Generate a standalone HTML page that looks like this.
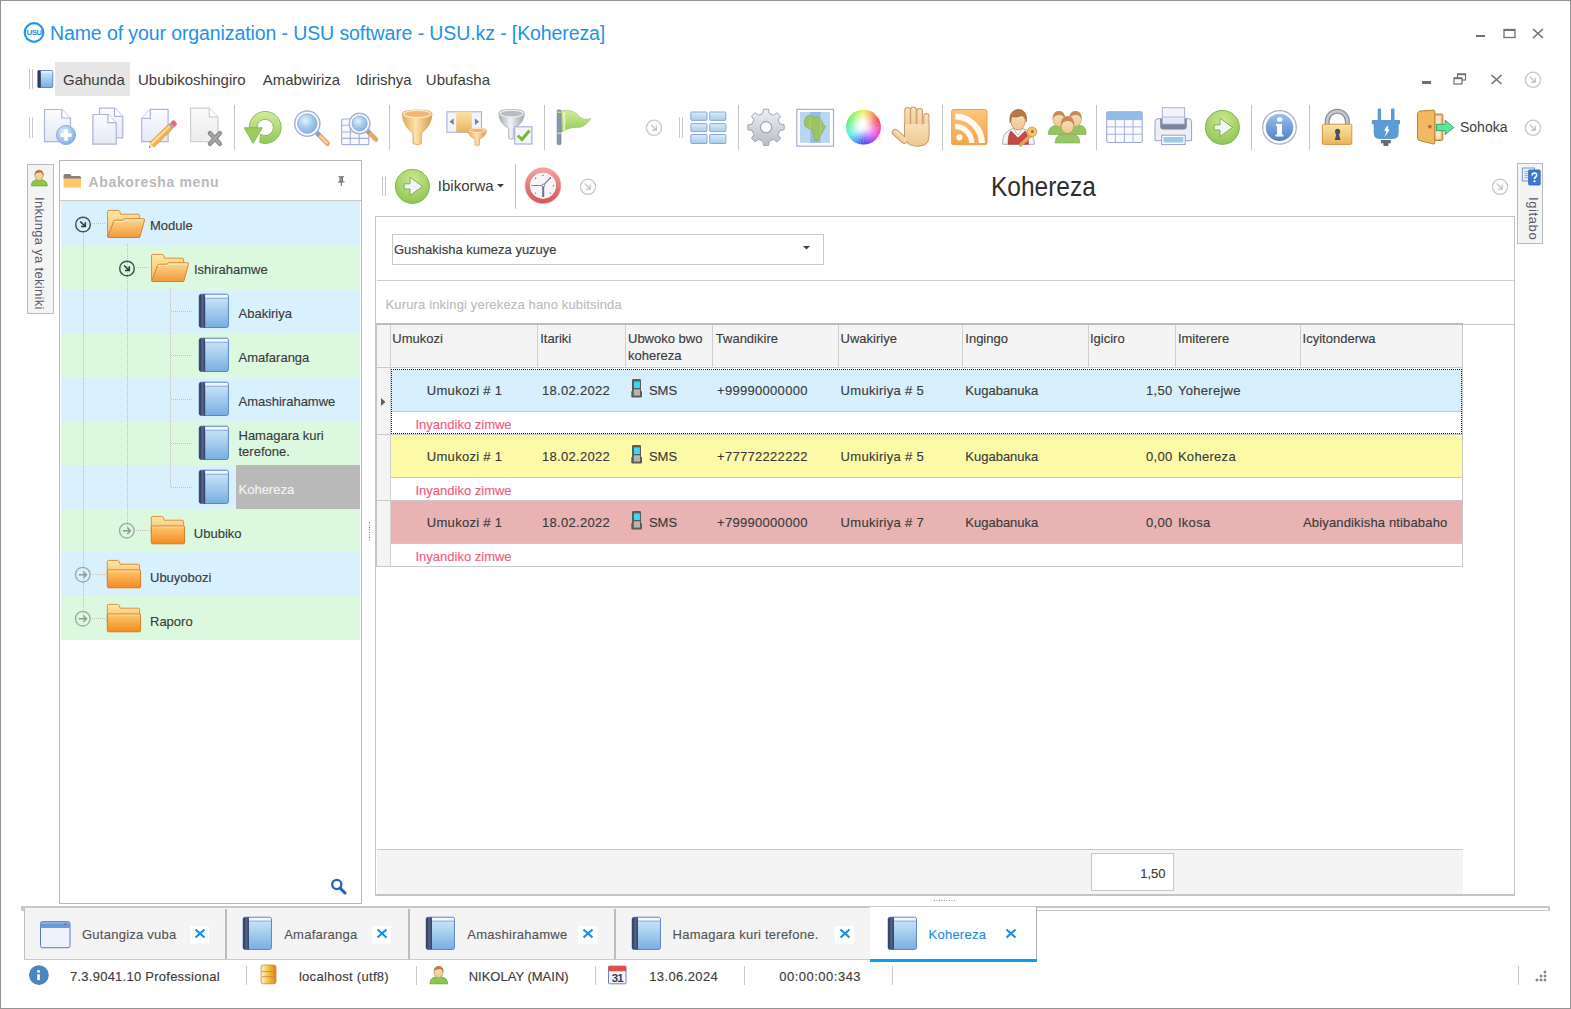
<!DOCTYPE html><html><head><meta charset="utf-8"><title>Kohereza</title><style>
html,body{margin:0;padding:0;}
body{width:1571px;height:1009px;position:relative;overflow:hidden;background:#fff;font-family:"Liberation Sans",sans-serif;}
.t{position:absolute;white-space:nowrap;}
.t.s13{-webkit-text-stroke:0.15px currentColor;}
.r{position:absolute;}
svg.r{overflow:visible;}
</style></head><body>

<svg width="0" height="0" style="position:absolute"><defs>
<linearGradient id="gPage" x1="0" y1="0" x2="0" y2="1"><stop offset="0" stop-color="#fbfcff"/><stop offset="1" stop-color="#e4e9f6"/></linearGradient>
<linearGradient id="gPageGray" x1="0" y1="0" x2="0" y2="1"><stop offset="0" stop-color="#fafafa"/><stop offset="1" stop-color="#ececec"/></linearGradient>
<radialGradient id="gBlueBall" cx="0.4" cy="0.35" r="0.7"><stop offset="0" stop-color="#e6f2fc"/><stop offset="0.5" stop-color="#a6ccee"/><stop offset="1" stop-color="#7fb0e0"/></radialGradient>
<linearGradient id="gGreen" x1="0" y1="0" x2="0" y2="1"><stop offset="0" stop-color="#d4ec9c"/><stop offset="1" stop-color="#92c85a"/></linearGradient>
<radialGradient id="gGreenBall" cx="0.5" cy="0.3" r="0.75"><stop offset="0" stop-color="#cde98f"/><stop offset="1" stop-color="#8cc250"/></radialGradient>
<linearGradient id="gGold" x1="0" y1="0" x2="1" y2="0"><stop offset="0" stop-color="#e6a860"/><stop offset="0.45" stop-color="#fde2a8"/><stop offset="1" stop-color="#d89a50"/></linearGradient>
<linearGradient id="gGoldV" x1="0" y1="0" x2="0" y2="1"><stop offset="0" stop-color="#fbe3a4"/><stop offset="1" stop-color="#eab45c"/></linearGradient>
<linearGradient id="gSilver" x1="0" y1="0" x2="1" y2="0"><stop offset="0" stop-color="#a8acb4"/><stop offset="0.45" stop-color="#f2f3f6"/><stop offset="1" stop-color="#9ea4ae"/></linearGradient>
<linearGradient id="gGear" x1="0" y1="0" x2="0" y2="1"><stop offset="0" stop-color="#eef0f4"/><stop offset="1" stop-color="#b8bcc6"/></linearGradient>
<linearGradient id="gCell" x1="0" y1="0" x2="0" y2="1"><stop offset="0" stop-color="#dcecfa"/><stop offset="1" stop-color="#a8ccec"/></linearGradient>
<linearGradient id="gOrange" x1="0" y1="0" x2="0" y2="1"><stop offset="0" stop-color="#fcc77c"/><stop offset="1" stop-color="#f4a448"/></linearGradient>
<linearGradient id="gSkin" x1="0" y1="0" x2="0" y2="1"><stop offset="0" stop-color="#f8e0b8"/><stop offset="1" stop-color="#eec890"/></linearGradient>
<linearGradient id="gBook" x1="0" y1="0" x2="0" y2="1"><stop offset="0" stop-color="#d2eafa"/><stop offset="1" stop-color="#78aee2"/></linearGradient>
<linearGradient id="gFolderB" x1="0" y1="0" x2="0" y2="1"><stop offset="0" stop-color="#fde9a8"/><stop offset="1" stop-color="#f2b660"/></linearGradient>
<linearGradient id="gFolderF" x1="0" y1="0" x2="0" y2="1"><stop offset="0" stop-color="#fdd890"/><stop offset="1" stop-color="#f09a3c"/></linearGradient>
<linearGradient id="gFolderC" x1="0" y1="0" x2="0" y2="1"><stop offset="0" stop-color="#ffc870"/><stop offset="1" stop-color="#f28a20"/></linearGradient>
<linearGradient id="gInfo" x1="0" y1="0" x2="0" y2="1"><stop offset="0" stop-color="#9cc0ec"/><stop offset="1" stop-color="#4f82c8"/></linearGradient>
<linearGradient id="gRed" x1="0" y1="0" x2="0" y2="1"><stop offset="0" stop-color="#f0a0a0"/><stop offset="1" stop-color="#d85858"/></linearGradient>
<radialGradient id="gWheelW" cx="0.5" cy="0.5" r="0.5"><stop offset="0" stop-color="#fff" stop-opacity="1"/><stop offset="0.35" stop-color="#fff" stop-opacity="0.8"/><stop offset="1" stop-color="#fff" stop-opacity="0"/></radialGradient>
</defs><symbol id="tbNew" viewBox="0 0 40 40" overflow="visible"><path d="M2.5 3.5 H19.8 L28.5 12.2 V35.6 H2.5Z" fill="url(#gPage)" stroke="#aeb4dc" stroke-width="1.2"/><path d="M19.8 3.5 V12 H28.5" fill="#fff" stroke="#aeb4dc" stroke-width="1.2"/><circle cx="24" cy="29" r="9.6" fill="url(#gBlueBall)" stroke="#8fb2dc" stroke-width="1"/><path d="M24 23.3 V34.7 M18.3 29 H29.7" stroke="#fff" stroke-width="3.6"/></symbol><symbol id="tbCopy" viewBox="0 0 40 40" overflow="visible"><path d="M9.5 2.2 H24.5 L32.8 10.5 V31.9 H9.5Z" fill="url(#gPage)" stroke="#aeb4dc" stroke-width="1.2"/><path d="M24.5 2.2 V10.3 H32.8" fill="#fff" stroke="#aeb4dc" stroke-width="1.2"/><path d="M2.9 8.5 H17.9 L26.2 16.8 V38.2 H2.9Z" fill="url(#gPage)" stroke="#aeb4dc" stroke-width="1.2"/><path d="M17.9 8.5 V16.6 H26.2" fill="#fff" stroke="#aeb4dc" stroke-width="1.2"/></symbol><symbol id="tbEdit" viewBox="0 0 40 40" overflow="visible"><path d="M1.7 12.3 L10.3 3.4 H28.1 V35.6 H1.7Z" fill="url(#gPage)" stroke="#aeb4dc" stroke-width="1.2"/><path d="M10.3 3.4 V12.3 H1.7" fill="#fff" stroke="#aeb4dc" stroke-width="1.2"/><g transform="translate(9 41.5) rotate(-44)"><rect x="4" y="-3" width="26" height="6" fill="#f2c458" stroke="#c89038" stroke-width="0.7"/><path d="M4 -1 H30" stroke="#fde8a8" stroke-width="1.2"/><path d="M4 1.5 H30" stroke="#e0a040" stroke-width="0.9"/><rect x="30" y="-3" width="2.4" height="6" fill="#98a6c8"/><path d="M32.4 -3 H35 Q37 -3 37 -1 V1 Q37 3 35 3 H32.4Z" fill="#e86878"/><path d="M4 -3 L0 0 L4 3Z" fill="#f0dcb4"/><path d="M1.3 -1 L0 0 L1.3 1Z" fill="#404858"/></g></symbol><symbol id="tbDel" viewBox="0 0 40 40" overflow="visible"><path d="M1.6 2.2 H20.3 L29 10.9 V35.6 H1.6Z" fill="url(#gPageGray)" stroke="#cfcfcf" stroke-width="1.2"/><path d="M20.3 2.2 V10.9 H29" fill="#fff" stroke="#cfcfcf" stroke-width="1.2"/><path d="M21 27.2 L30.8 37.8 M30.8 27.2 L21 37.8" stroke="#8a8a8a" stroke-width="4.6" stroke-linecap="round"/><path d="M21 27.2 L30.8 37.8 M30.8 27.2 L21 37.8" stroke="#a8a8a8" stroke-width="2" stroke-linecap="round"/></symbol><symbol id="tbRefresh" viewBox="0 0 40 40" overflow="visible"><path d="M6.2 21.8 A16 16 0 1 1 16.8 36.5 L17.5 28.2 A8.2 8.2 0 1 0 14 21.8 Z" fill="url(#gGreen)" stroke="#86b454" stroke-width="0.9"/><path d="M1.2 21.8 H19.4 L10.1 37.4Z" fill="#9ccc60" stroke="#86b454" stroke-width="0.9" stroke-linejoin="round"/></symbol><symbol id="tbSearch" viewBox="0 0 40 40" overflow="visible"><path d="M24 27 L34.5 37.5" stroke="#e8a860" stroke-width="5" stroke-linecap="round"/><path d="M24.5 27.5 L34 37" stroke="#f8d8a0" stroke-width="2" stroke-linecap="round"/><path d="M22.5 25.5 L26.5 29.5" stroke="#8aa0c8" stroke-width="4.4"/><circle cx="14.3" cy="17.6" r="12.6" fill="#fff" stroke="#a8b4d4" stroke-width="1.5"/><circle cx="14.3" cy="17.6" r="9.8" fill="url(#gBlueBall)" stroke="#8aa8d8" stroke-width="0.8"/></symbol><symbol id="tbSearchGrid" viewBox="0 0 40 40" overflow="visible"><rect x="0.6" y="13" width="27.2" height="25.7" rx="1" fill="#f8f9fd" stroke="#a8b0dc" stroke-width="1.2"/><path d="M9.3 13 V38.7 M18.2 13 V38.7 M0.6 19.3 H27.8 M0.6 26 H27.8 M0.6 32.4 H27.8" stroke="#a8b0dc" stroke-width="1.1"/><path d="M26.5 25 L35 33.5" stroke="#e8a860" stroke-width="4.6" stroke-linecap="round"/><path d="M25 23.5 L28.5 27" stroke="#8aa0c8" stroke-width="4"/><circle cx="18.6" cy="17.5" r="10.3" fill="#fff" stroke="#a8b4d4" stroke-width="1.4"/><circle cx="18.6" cy="17.5" r="7.6" fill="url(#gBlueBall)" stroke="#8aa8d8" stroke-width="0.8"/></symbol><symbol id="tbFunnel" viewBox="0 0 40 40" overflow="visible"><path d="M2.4 8 Q2 4 17.2 4 Q32.4 4 32 8 Q31.5 20 21.3 27 V37.5 Q17.2 40 13 37.5 V27 Q2.9 20 2.4 8Z" fill="url(#gGold)" stroke="#d8a058" stroke-width="0.8"/><ellipse cx="17.2" cy="8" rx="13.8" ry="3.6" fill="#f0b878" stroke="#fbe8c0" stroke-width="1.2"/></symbol><symbol id="tbFilterCol" viewBox="0 0 40 40" overflow="visible"><rect x="1.9" y="5.8" width="34.6" height="20.5" fill="#f2f4fc" stroke="#a8b0dc" stroke-width="1.1"/><rect x="11.2" y="5.8" width="15.6" height="20.5" fill="url(#gGoldV)"/><path d="M4.5 15.7 L8.7 12.3 V19Z M34.1 15.7 L29.9 12.3 V19Z" fill="#7a8498"/><path d="M23 24.5 Q23 22.3 32.2 22.3 Q41.4 22.3 41.4 24.5 Q41 30.5 34.5 33 V39 Q32.3 40.4 30 39 V33 Q23.4 30.5 23 24.5Z" fill="url(#gGold)" stroke="#d8a058" stroke-width="0.7"/><ellipse cx="32.2" cy="24.4" rx="8.2" ry="2" fill="#f0b070" stroke="#fff0d0" stroke-width="0.9"/></symbol><symbol id="tbFunnelCheck" viewBox="0 0 40 40" overflow="visible"><path d="M1.8 7.5 Q1.5 3.5 14.6 3.5 Q27.7 3.5 27.4 7.5 Q27 17 16.8 22.5 V32.5 Q14.2 34 11.7 32.5 V22.5 Q2.2 17 1.8 7.5Z" fill="url(#gSilver)" stroke="#a0a6b0" stroke-width="0.8"/><ellipse cx="14.6" cy="7.6" rx="11.8" ry="3.4" fill="#b8bcc4" stroke="#f4f4f8" stroke-width="1.1"/><rect x="17.7" y="20.8" width="17.2" height="17.2" fill="#f4f6fc" stroke="#a8b0dc" stroke-width="1.2"/><path d="M20.8 29.5 L25 33.5 L32.5 24.5" fill="none" stroke="#78b840" stroke-width="3"/></symbol><symbol id="tbFlag" viewBox="0 0 40 40" overflow="visible"><path d="M5 5 Q12 3.5 17 5.5 Q21 7 24 11.5 Q29 14.5 35 12.5 Q31 19 25 21 Q21 22 17 21.5 Q11 22.5 5 26Z" fill="url(#gGreen)" stroke="#9cc46c" stroke-width="0.6"/><path d="M8 6 Q9 14 8 24" stroke="#f0f8d8" stroke-width="2" fill="none" opacity="0.8"/><rect x="1.1" y="3.9" width="3.9" height="34.7" rx="1" fill="#8c96ac" stroke="#6c7890" stroke-width="0.6"/><rect x="1.1" y="5.5" width="3.9" height="1.5" fill="#b8dc80"/><rect x="1.1" y="26.5" width="3.9" height="1.5" fill="#b8dc80"/></symbol><symbol id="tbGrid" viewBox="0 0 40 40" overflow="visible"><rect x="0.8" y="6" width="16.2" height="8.4" rx="0.8" fill="url(#gCell)" stroke="#88a8dc" stroke-width="1"/><rect x="0.8" y="17.6" width="16.2" height="8" rx="0.8" fill="url(#gCell)" stroke="#88a8dc" stroke-width="1"/><rect x="0.8" y="28.5" width="16.2" height="9" rx="0.8" fill="url(#gCell)" stroke="#88a8dc" stroke-width="1"/><rect x="19.7" y="6" width="16.2" height="8.4" rx="0.8" fill="url(#gCell)" stroke="#88a8dc" stroke-width="1"/><rect x="19.7" y="17.6" width="16.2" height="8" rx="0.8" fill="url(#gCell)" stroke="#88a8dc" stroke-width="1"/><rect x="19.7" y="28.5" width="16.2" height="9" rx="0.8" fill="url(#gCell)" stroke="#88a8dc" stroke-width="1"/></symbol><symbol id="tbGear" viewBox="0 0 40 40" overflow="visible"><path d="M15.69 7.49 L16.56 3.16 L21.44 3.16 L22.31 7.49 L26.42 9.19 L30.10 6.75 L33.55 10.20 L31.11 13.88 L32.81 17.99 L37.14 18.86 L37.14 23.74 L32.81 24.61 L31.11 28.72 L33.55 32.40 L30.10 35.85 L26.42 33.41 L22.31 35.11 L21.44 39.44 L16.56 39.44 L15.69 35.11 L11.58 33.41 L7.90 35.85 L4.45 32.40 L6.89 28.72 L5.19 24.61 L0.86 23.74 L0.86 18.86 L5.19 17.99 L6.89 13.88 L4.45 10.20 L7.90 6.75 L11.58 9.19Z" fill="url(#gGear)" stroke="#9ea4b0" stroke-width="1" stroke-linejoin="round"/><circle cx="19" cy="21.3" r="5.6" fill="#fff" stroke="#9ea4b0" stroke-width="1.2"/></symbol><symbol id="tbMap" viewBox="0 0 40 40" overflow="visible"><rect x="0.8" y="3.4" width="36.7" height="36.7" fill="#fff" stroke="#a4acd8" stroke-width="1.2"/><rect x="4" y="6" width="29.9" height="30.8" fill="#b8d6f0"/><rect x="14" y="6" width="10.7" height="30.8" fill="#98bce0"/><path d="M10 11 Q13 7.5 15 10 Q19 12 23 11 Q25 12 25.5 15 Q27 19 29.5 20 Q28 24 26 27 Q24 31 22 35 Q19 36 18 31 Q17 26 16 23 Q12 24 9 20 Q7 15 10 11Z" fill="#9cc460" stroke="#7ea048" stroke-width="0.5"/><path d="M14 9 V36 M24.7 9 V36" stroke="#e8f0f8" stroke-width="0.5" opacity="0.5"/></symbol><symbol id="tbColor" viewBox="0 0 40 40" overflow="visible"><defs><clipPath id="cwc"><circle cx="18.5" cy="21.2" r="17.4"/></clipPath><radialGradient id="gWheelW2" cx="0.47" cy="0.45" r="0.55"><stop offset="0" stop-color="#fff" stop-opacity="1"/><stop offset="0.25" stop-color="#fff" stop-opacity="0.85"/><stop offset="0.7" stop-color="#fff" stop-opacity="0.25"/><stop offset="1" stop-color="#fff" stop-opacity="0"/></radialGradient></defs><g clip-path="url(#cwc)"><path d="M18.5 21.2 L18.50 -3.80 A25 25 0 0 1 23.27 -3.34Z" fill="hsl(55,85%,60%)"/><path d="M18.5 21.2 L22.84 -3.42 A25 25 0 0 1 27.46 -2.14Z" fill="hsl(45,85%,60%)"/><path d="M18.5 21.2 L27.05 -2.29 A25 25 0 0 1 31.38 -0.23Z" fill="hsl(35,85%,60%)"/><path d="M18.5 21.2 L31.00 -0.45 A25 25 0 0 1 34.90 2.33Z" fill="hsl(25,85%,60%)"/><path d="M18.5 21.2 L34.57 2.05 A25 25 0 0 1 37.93 5.47Z" fill="hsl(15,85%,60%)"/><path d="M18.5 21.2 L37.65 5.13 A25 25 0 0 1 40.37 9.08Z" fill="hsl(5,85%,60%)"/><path d="M18.5 21.2 L40.15 8.70 A25 25 0 0 1 42.14 13.06Z" fill="hsl(355,85%,60%)"/><path d="M18.5 21.2 L41.99 12.65 A25 25 0 0 1 43.19 17.29Z" fill="hsl(345,85%,60%)"/><path d="M18.5 21.2 L43.12 16.86 A25 25 0 0 1 43.50 21.64Z" fill="hsl(335,85%,60%)"/><path d="M18.5 21.2 L43.50 21.20 A25 25 0 0 1 43.04 25.97Z" fill="hsl(325,85%,60%)"/><path d="M18.5 21.2 L43.12 25.54 A25 25 0 0 1 41.84 30.16Z" fill="hsl(315,85%,60%)"/><path d="M18.5 21.2 L41.99 29.75 A25 25 0 0 1 39.93 34.08Z" fill="hsl(305,85%,60%)"/><path d="M18.5 21.2 L40.15 33.70 A25 25 0 0 1 37.37 37.60Z" fill="hsl(295,85%,60%)"/><path d="M18.5 21.2 L37.65 37.27 A25 25 0 0 1 34.23 40.63Z" fill="hsl(285,85%,60%)"/><path d="M18.5 21.2 L34.57 40.35 A25 25 0 0 1 30.62 43.07Z" fill="hsl(275,85%,60%)"/><path d="M18.5 21.2 L31.00 42.85 A25 25 0 0 1 26.64 44.84Z" fill="hsl(265,85%,60%)"/><path d="M18.5 21.2 L27.05 44.69 A25 25 0 0 1 22.41 45.89Z" fill="hsl(255,85%,60%)"/><path d="M18.5 21.2 L22.84 45.82 A25 25 0 0 1 18.06 46.20Z" fill="hsl(245,85%,60%)"/><path d="M18.5 21.2 L18.50 46.20 A25 25 0 0 1 13.73 45.74Z" fill="hsl(235,85%,60%)"/><path d="M18.5 21.2 L14.16 45.82 A25 25 0 0 1 9.54 44.54Z" fill="hsl(225,85%,60%)"/><path d="M18.5 21.2 L9.95 44.69 A25 25 0 0 1 5.62 42.63Z" fill="hsl(215,85%,60%)"/><path d="M18.5 21.2 L6.00 42.85 A25 25 0 0 1 2.10 40.07Z" fill="hsl(205,85%,60%)"/><path d="M18.5 21.2 L2.43 40.35 A25 25 0 0 1 -0.93 36.93Z" fill="hsl(195,85%,60%)"/><path d="M18.5 21.2 L-0.65 37.27 A25 25 0 0 1 -3.37 33.32Z" fill="hsl(185,85%,60%)"/><path d="M18.5 21.2 L-3.15 33.70 A25 25 0 0 1 -5.14 29.34Z" fill="hsl(175,85%,60%)"/><path d="M18.5 21.2 L-4.99 29.75 A25 25 0 0 1 -6.19 25.11Z" fill="hsl(165,85%,60%)"/><path d="M18.5 21.2 L-6.12 25.54 A25 25 0 0 1 -6.50 20.76Z" fill="hsl(155,85%,60%)"/><path d="M18.5 21.2 L-6.50 21.20 A25 25 0 0 1 -6.04 16.43Z" fill="hsl(145,85%,60%)"/><path d="M18.5 21.2 L-6.12 16.86 A25 25 0 0 1 -4.84 12.24Z" fill="hsl(135,85%,60%)"/><path d="M18.5 21.2 L-4.99 12.65 A25 25 0 0 1 -2.93 8.32Z" fill="hsl(125,85%,60%)"/><path d="M18.5 21.2 L-3.15 8.70 A25 25 0 0 1 -0.37 4.80Z" fill="hsl(115,85%,60%)"/><path d="M18.5 21.2 L-0.65 5.13 A25 25 0 0 1 2.77 1.77Z" fill="hsl(105,85%,60%)"/><path d="M18.5 21.2 L2.43 2.05 A25 25 0 0 1 6.38 -0.67Z" fill="hsl(95,85%,60%)"/><path d="M18.5 21.2 L6.00 -0.45 A25 25 0 0 1 10.36 -2.44Z" fill="hsl(85,85%,60%)"/><path d="M18.5 21.2 L9.95 -2.29 A25 25 0 0 1 14.59 -3.49Z" fill="hsl(75,85%,60%)"/><path d="M18.5 21.2 L14.16 -3.42 A25 25 0 0 1 18.94 -3.80Z" fill="hsl(65,85%,60%)"/><circle cx="18.5" cy="21.2" r="17.4" fill="url(#gWheelW2)"/></g></symbol><symbol id="tbHand" viewBox="0 0 40 40" overflow="visible"><g stroke="#c89a68" stroke-width="2" fill="#c89a68"><rect x="11.3" y="2" width="4.6" height="24" rx="2.3"/><rect x="17.2" y="1.6" width="4.6" height="24" rx="2.3"/><rect x="23.4" y="3" width="4.6" height="24" rx="2.3"/><rect x="30.2" y="8" width="4.2" height="22" rx="2.1"/><path d="M11 18 H34.4 V30 Q34.4 39.7 23 39.7 Q16 39.7 13 35.5 L11 31Z"/><rect x="-0.5" y="25" width="17" height="5" rx="2.5" transform="rotate(42 3 26)"/></g><g fill="url(#gSkin)"><rect x="11.3" y="2" width="4.6" height="24" rx="2.3"/><rect x="17.2" y="1.6" width="4.6" height="24" rx="2.3"/><rect x="23.4" y="3" width="4.6" height="24" rx="2.3"/><rect x="30.2" y="8" width="4.2" height="22" rx="2.1"/><path d="M11 18 H34.4 V30 Q34.4 39.7 23 39.7 Q16 39.7 13 35.5 L11 31Z"/><rect x="-0.5" y="25" width="17" height="5" rx="2.5" transform="rotate(42 3 26)"/></g><path d="M15.9 6 V19 M21.8 6 V19 M28 7 V20" stroke="#e0b888" stroke-width="0.6"/></symbol><symbol id="tbRss" viewBox="0 0 40 40" overflow="visible"><rect x="0.7" y="3.5" width="35.3" height="35.2" rx="1.8" fill="url(#gOrange)" stroke="#eca050" stroke-width="1"/><path d="M4.3 7.4 A30 30 0 0 1 34 37 H27.8 A23.8 23.8 0 0 0 4.3 13.4Z" fill="#fff" opacity="0.92"/><path d="M4.3 17.8 A19.5 19.5 0 0 1 23.5 37 H18 A14 14 0 0 0 4.3 23.2Z" fill="#fff" opacity="0.92"/><circle cx="8.4" cy="31.3" r="3.1" fill="#fff"/></symbol><symbol id="tbUserKey" viewBox="0 0 40 40" overflow="visible"><path d="M0.6 38.3 Q0.5 27 7 24.5 L11 22.6 H21 L25 24.5 Q31.5 27 32.5 38.3Z" fill="#f4f4f4" stroke="#9c9c9c" stroke-width="0.8"/><path d="M6 38.3 Q6 28 9 25 L16 32 L23 25 Q26.5 28 26.5 38.3Z" fill="#c84848" stroke="#983030" stroke-width="0.5"/><path d="M11.5 22.5 L16 29 L20.5 22.5" fill="#fff" stroke="#a0a0a0" stroke-width="0.6"/><ellipse cx="16" cy="15.5" rx="7" ry="8.5" fill="url(#gSkin)" stroke="#b88858" stroke-width="0.7"/><path d="M8.2 17 Q6 5 16 3.2 Q26 4 24.3 16 Q23.5 10 20 9.5 Q14 12 9.5 10.5 Q8.5 13 8.2 17Z" fill="#b87848" stroke="#905828" stroke-width="0.6"/><path d="M29.5 29 L18.5 39" stroke="#e0a850" stroke-width="3.4" stroke-linecap="round"/><circle cx="30" cy="25.8" r="4.8" fill="#f4c468" stroke="#d09438" stroke-width="0.8"/><circle cx="30.3" cy="25.5" r="1.5" fill="#a07040"/></symbol><symbol id="tbGroup" viewBox="0 0 40 40" overflow="visible"><path d="M-0.8 28.5 Q-0.5 20.5 6 19.5 H14 Q19 20.5 19.5 28.5Z" fill="#94c460" stroke="#78a848" stroke-width="0.6"/><path d="M18 28.5 Q18.5 20.5 24.5 19.5 H32 Q37.5 20.5 37 28.5Z" fill="#94c460" stroke="#78a848" stroke-width="0.6"/><ellipse cx="9.9" cy="13" rx="6" ry="7.5" fill="url(#gSkin)" stroke="#c09060" stroke-width="0.6"/><path d="M3.9 13 Q3.5 5 9.9 5 Q16.3 5 15.9 13 Q14 8.5 9.9 9 Q5.5 9 3.9 13Z" fill="#c48a58"/><ellipse cx="26.5" cy="13" rx="6" ry="7.5" fill="url(#gSkin)" stroke="#c09060" stroke-width="0.6"/><path d="M20.5 13 Q20 5 26.5 5 Q33 5 32.5 13 Q30.5 8.5 26.5 9 Q22 9 20.5 13Z" fill="#c48a58"/><path d="M6 37 Q6.5 29 13 28 H24 Q30.5 29 31 37Z" fill="#98c864" stroke="#78a848" stroke-width="0.6"/><ellipse cx="18.5" cy="19.5" rx="6.5" ry="8" fill="url(#gSkin)" stroke="#c09060" stroke-width="0.6"/><path d="M12 20 Q11.5 10 18.5 10 Q25.5 10 25 20 Q23 14.5 18.5 15 Q14 15 12 20Z" fill="#c48a58"/></symbol><symbol id="tbTable" viewBox="0 0 40 40" overflow="visible"><rect x="0.7" y="5.8" width="35.5" height="30.7" rx="1.5" fill="#fafbfe" stroke="#9ea8d8" stroke-width="1.1"/><path d="M0.7 7.3 Q0.7 5.8 2.2 5.8 H34.7 Q36.2 5.8 36.2 7.3 V13.6 H0.7Z" fill="#90bce8"/><path d="M9.3 5.8 V36.5 M18.4 5.8 V36.5 M27 5.8 V36.5 M0.7 13.6 H36.2 M0.7 20.9 H36.2 M0.7 28.2 H36.2" stroke="#a8b0dc" stroke-width="1"/></symbol><symbol id="tbPrint" viewBox="0 0 40 40" overflow="visible"><rect x="7.3" y="1.7" width="22.3" height="17" fill="#f2f4fa" stroke="#a8b0d4" stroke-width="1"/><path d="M3 12.7 H33.6 Q36.6 12.7 36.6 15.7 V34.7 H0 V15.7 Q0 12.7 3 12.7Z" fill="#eceff8" stroke="#98a0c8" stroke-width="1"/><path d="M5.2 12.7 H31.7 V20.5 Q31.7 23.4 28.7 23.4 H8.2 Q5.2 23.4 5.2 20.5Z" fill="#7c8498"/><rect x="7.3" y="11" width="22.3" height="7" fill="#e4e8f4" stroke="#a8b0d4" stroke-width="0.8"/><rect x="6.7" y="29.2" width="23.5" height="9.4" fill="#fff" stroke="#98a0c8" stroke-width="1"/><rect x="8.5" y="31" width="19.9" height="5.6" fill="#9ccaf0"/></symbol><symbol id="tbGo" viewBox="0 0 40 40" overflow="visible"><circle cx="18.4" cy="21.4" r="17" fill="url(#gGreenBall)" stroke="#84b450" stroke-width="1"/><path d="M10.2 18.8 H16 V12.2 L28.5 21.4 L16 30.6 V24 H10.2Z" fill="#f0f4f8" stroke="#6c9c40" stroke-width="0.8" stroke-linejoin="round"/></symbol><symbol id="tbInfo" viewBox="0 0 40 40" overflow="visible"><circle cx="17.5" cy="21.4" r="16.8" fill="#fff" stroke="#a8acd4" stroke-width="1.2"/><circle cx="17.5" cy="21.4" r="13.7" fill="url(#gInfo)"/><ellipse cx="17.7" cy="13.5" rx="2.8" ry="2.2" fill="#fff"/><path d="M14 18 H20 V28.5 H21.5 V30.5 H13.5 V28.5 H15 V20 H14Z" fill="#fff"/></symbol><symbol id="tbLock" viewBox="0 0 40 40" overflow="visible"><path d="M8.2 19 V15.3 A10.1 10.1 0 0 1 28.4 15.3 V19" fill="none" stroke="#8a9098" stroke-width="5"/><path d="M8.2 19 V15.3 A10.1 10.1 0 0 1 28.4 15.3 V19" fill="none" stroke="#c4c8d0" stroke-width="2.4"/><rect x="3.4" y="18.2" width="29.4" height="20.2" rx="1.2" fill="url(#gGoldV)" stroke="#d49448" stroke-width="1"/><path d="M18.6 22.7 Q21.2 22.7 21.2 25.6 Q21.2 27.5 20 28.4 L21.4 34 H15.8 L17.2 28.4 Q16 27.5 16 25.6 Q16 22.7 18.6 22.7Z" fill="#485060"/></symbol><symbol id="tbPlug" viewBox="0 0 40 40" overflow="visible"><rect x="9.7" y="2.6" width="3.4" height="12" rx="1" fill="#5b9ad2"/><rect x="23" y="2.6" width="3.5" height="12" rx="1" fill="#5b9ad2"/><path d="M3.9 13.9 H32 V18.2 H30.7 V27 Q30.7 33 24 33 H12.4 Q5.7 33 5.7 27 V18.2 H3.9Z" fill="#5b9ad2"/><path d="M20.5 19.5 Q17.5 20.5 16.5 24 Q16.3 25.5 18.3 25.3 L16.5 31 L21.3 24.3 Q21.5 23 19.8 23.2 Z" fill="#fff"/><rect x="13" y="34" width="9.8" height="3.3" fill="#666c74"/><rect x="15.5" y="37" width="4.8" height="3" fill="#666c74"/></symbol><symbol id="tbDoor" viewBox="0 0 40 40" overflow="visible"><rect x="17.5" y="8" width="9.3" height="26.5" rx="1" fill="#f2b860" stroke="#b07c3c" stroke-width="0.9"/><rect x="19.5" y="10" width="5.2" height="22.5" fill="#fde6c6"/><path d="M1.5 7.8 Q2 5.5 4 5 L17.5 4.1 Q18.8 4.2 18.8 5.5 V36.8 Q18.8 38.1 17.5 38 L3.5 34.5 Q1.5 34 1.5 32Z" fill="#f4b860" stroke="#a87838" stroke-width="0.9"/><circle cx="13.9" cy="20.7" r="1.9" fill="#a07848"/><path d="M20.4 18.3 H29.1 V14.2 L37.8 21.5 L29.1 28.6 V24.7 H20.4Z" fill="#5ce69a" stroke="#2c9a60" stroke-width="0.9" stroke-linejoin="round"/></symbol><symbol id="bookS" viewBox="0 0 16 18" overflow="visible"><rect x="0.8" y="0.5" width="15" height="17" rx="1" fill="url(#gBook)" stroke="#4a70b0" stroke-width="0.8"/><rect x="0.8" y="0.5" width="3" height="17" fill="#2c3a5c"/><rect x="3.8" y="1.2" width="11.5" height="1.2" fill="#f4f8fc"/></symbol><symbol id="circArrow" viewBox="0 0 18 18" overflow="visible"><circle cx="9" cy="8.8" r="7.6" fill="none" stroke="#c8c8c8" stroke-width="1.3"/><path d="M6 5.8 L11.3 11.1 M11.3 6.8 V11.1 H7" fill="none" stroke="#c0c0c0" stroke-width="1.3"/></symbol><symbol id="treeOpen" viewBox="0 0 18 18" overflow="visible"><circle cx="9" cy="9.5" r="7.3" fill="none" stroke="#465654" stroke-width="1.5"/><path d="M6.2 6.5 L11 11.3 M11.3 7.2 V11.5 H7" fill="none" stroke="#2f3a3a" stroke-width="1.6"/></symbol><symbol id="treeClosed" viewBox="0 0 18 18" overflow="visible"><circle cx="8.8" cy="9.7" r="7.3" fill="none" stroke="#9aaaa4" stroke-width="1.3"/><path d="M4.8 9.7 H12.5 M9.3 6.5 L12.5 9.7 L9.3 12.9" fill="none" stroke="#8a9c96" stroke-width="1.4"/></symbol><symbol id="folderOpen" viewBox="0 0 42 32" overflow="visible"><path d="M2.5 4 Q2.5 2.4 4 2.4 H13 Q14.5 2.4 15 4 L15.5 6.2 H33 Q34.7 6.2 34.7 8 V28.5 Q34.7 29.5 33.5 29.5 H3.5 Q2.5 29.5 2.5 28.5Z" fill="url(#gFolderB)" stroke="#d88830" stroke-width="0.9"/><path d="M8.6 13.5 Q9 12.2 10.5 12.2 H18 L19.5 10.8 H38.5 Q39.8 10.8 39.5 12.2 L35 28.5 Q34.7 29.5 33.5 29.5 H4 Q2.6 29.5 3 28.2Z" fill="url(#gFolderF)" stroke="#d07c28" stroke-width="0.9"/><path d="M9.5 13.5 H18.5 L20 12 H38" fill="none" stroke="#fff4d8" stroke-width="0.8"/></symbol><symbol id="folderClosed" viewBox="0 0 38 32" overflow="visible"><path d="M2.3 4 Q2.3 2.4 3.8 2.4 H12.5 Q14 2.4 14.5 4 L15 6.2 H33.2 Q34.7 6.2 34.7 8 V20 H2.3Z" fill="url(#gFolderB)" stroke="#d88830" stroke-width="0.9"/><rect x="2.3" y="12" width="33.3" height="17.8" rx="1.3" fill="url(#gFolderC)" stroke="#d07420" stroke-width="0.9"/><path d="M3.3 13 H34.5" stroke="#ffe0a0" stroke-width="0.8"/></symbol><symbol id="bookL" viewBox="0 0 34 36" overflow="visible"><rect x="2.2" y="1.2" width="29.2" height="33.3" rx="2" fill="url(#gBook)" stroke="#5a84c4" stroke-width="1"/><defs><linearGradient id="gSpine" x1="0" y1="0" x2="1" y2="0"><stop offset="0" stop-color="#28324e"/><stop offset="0.55" stop-color="#56658c"/><stop offset="1" stop-color="#303c60"/></linearGradient></defs><path d="M4.2 1.2 H8.2 V34.5 H4.2 Q2.2 34.5 2.2 32.5 V3.2 Q2.2 1.2 4.2 1.2Z" fill="url(#gSpine)"/><rect x="8.2" y="2" width="22.5" height="2.6" fill="#f4f6fa"/><path d="M8.2 5.3 H30.8" stroke="#86b0e0" stroke-width="1"/></symbol><symbol id="folderHdr" viewBox="0 0 20 17" overflow="visible"><path d="M1.6 4 Q1.6 2 3.2 2 H8 L9.5 4 H17 Q19 4 19 5.5 V15.5 H1.6Z" fill="#ffc66a"/><path d="M1.6 4 Q1.6 2 3.2 2 H8 L9.5 4 H17 Q19 4 19 5.5 V6.5 H1.6Z" fill="#808080"/></symbol><symbol id="pin" viewBox="0 0 12 12" overflow="visible"><path d="M3.5 1.2 H9 V2.2 H8 V6.5 H9.5 V7.6 H6.8 V11 H5.8 V7.6 H3 V6.5 H4.5 V2.2 H3.5Z" fill="#6a6a6a"/><rect x="5.6" y="2.2" width="1" height="4.3" fill="#bcbcbc"/></symbol><symbol id="userS" viewBox="0 0 19 21" overflow="visible"><path d="M1 19.8 Q1 14.5 5 13.5 L7.5 12.8 H11.5 L14 13.5 Q18.6 14.5 18.6 19.8Z" fill="#8cc848" stroke="#5c9830" stroke-width="0.7"/><ellipse cx="9.6" cy="8.5" rx="4.2" ry="5.5" fill="url(#gSkin)" stroke="#b87840" stroke-width="0.6"/><path d="M4.6 9.5 Q4 2 9.6 2 Q15.2 2 14.6 9.5 Q13.5 5.5 11 5 Q7 6 5.5 6 Z" fill="#c07840"/></symbol><symbol id="searchBlue" viewBox="0 0 18 18" overflow="visible"><circle cx="6.8" cy="6.5" r="4.6" fill="none" stroke="#2262c0" stroke-width="2.3"/><path d="M10 10 L15 15" stroke="#2262c0" stroke-width="3" stroke-linecap="round"/></symbol><symbol id="clock" viewBox="0 0 38 38" overflow="visible"><circle cx="19" cy="18.7" r="15.4" fill="none" stroke="url(#gRed)" stroke-width="5"/><circle cx="19" cy="18.7" r="17.8" fill="none" stroke="#e0a0a0" stroke-width="0.6"/><circle cx="19" cy="18.7" r="12.8" fill="#f4f6fa"/><circle cx="19.00" cy="8.20" r="0.7" fill="#6c7490"/><circle cx="26.42" cy="11.28" r="0.7" fill="#6c7490"/><circle cx="29.50" cy="18.70" r="0.7" fill="#6c7490"/><circle cx="26.42" cy="26.12" r="0.7" fill="#6c7490"/><circle cx="11.58" cy="26.12" r="0.7" fill="#6c7490"/><circle cx="11.58" cy="11.28" r="0.7" fill="#6c7490"/><path d="M19.2 18.5 H7.6" stroke="#e05858" stroke-width="1"/><path d="M19.2 18.5 L26.6 10.5" stroke="#5c6478" stroke-width="1.1"/><path d="M19.2 18.5 V30" stroke="#6c7488" stroke-width="2"/><circle cx="19.2" cy="18.5" r="1.4" fill="#fff" stroke="#6c7488" stroke-width="0.8"/></symbol><symbol id="phone" viewBox="0 0 14 19" overflow="visible"><rect x="2" y="0" width="9" height="13" rx="1.2" fill="#5e5a58"/><rect x="1.3" y="12" width="10.7" height="6.4" rx="0.8" fill="#5e5a58"/><rect x="4" y="2.4" width="5.9" height="6.6" fill="#38d8f8"/><rect x="3.8" y="10.3" width="6.2" height="6.3" fill="#b8b4b0"/></symbol><symbol id="helpBook" viewBox="0 0 21 20" overflow="visible"><rect x="1.4" y="1" width="12" height="13" fill="#e8eef8" stroke="#7c98d0" stroke-width="1"/><path d="M3.5 4.5 H7 M3.5 6.5 H7 M3.5 8.5 H7 M3.5 10.5 H7" stroke="#8ca0c8" stroke-width="0.8"/><rect x="7.6" y="3" width="11.6" height="15" rx="1" fill="#3c78d0" stroke="#2c60b8" stroke-width="0.8"/><path d="M11.2 8.5 Q11.2 6 13.4 6 Q15.7 6 15.7 8.2 Q15.7 9.5 14.2 10.3 Q13.5 10.8 13.5 12" fill="none" stroke="#fff" stroke-width="1.6"/><rect x="12.6" y="13.3" width="1.8" height="1.8" fill="#fff"/></symbol><symbol id="winIcon" viewBox="0 0 31 29" overflow="visible"><rect x="0.5" y="1.5" width="29.5" height="26.2" rx="2" fill="#eef2fa" stroke="#5a7cc4" stroke-width="1"/><path d="M0.5 3.5 Q0.5 1.5 2.5 1.5 H28 Q30 1.5 30 3.5 V8 H0.5Z" fill="#6c9ad8"/><path d="M1.5 3 H29" stroke="#a8c8f0" stroke-width="0.8"/><circle cx="25.5" cy="4" r="1" fill="#e83030"/></symbol><symbol id="infoS" viewBox="0 0 21 21" overflow="visible"><circle cx="10.9" cy="10.1" r="9.9" fill="#4c84c4"/><rect x="9.2" y="5.1" width="2.7" height="2.5" fill="#fff"/><rect x="9.2" y="9.3" width="2.7" height="5.8" fill="#fff"/></symbol><symbol id="dbIcon" viewBox="0 0 19 22" overflow="visible"><defs><linearGradient id="gDb" x1="0" y1="0" x2="1" y2="0"><stop offset="0" stop-color="#fff4d0"/><stop offset="0.5" stop-color="#f4c040"/><stop offset="1" stop-color="#e07c28"/></linearGradient></defs><rect x="2.1" y="1" width="14.9" height="18.8" rx="2.2" fill="url(#gDb)" stroke="#c88438" stroke-width="0.8"/><path d="M2.8 7.5 H16.3 M2.8 12.7 H16.3" stroke="#c88438" stroke-width="0.8"/></symbol><symbol id="calIcon" viewBox="0 0 21 21" overflow="visible"><rect x="1.5" y="1.1" width="17.5" height="17.7" rx="1" fill="#f4f6fc" stroke="#7080c8" stroke-width="1"/><rect x="1.5" y="1.1" width="17.5" height="5.2" fill="#e05040"/><text x="10.3" y="17.3" font-size="11.5" font-weight="bold" text-anchor="middle" fill="#384058" font-family="Liberation Sans" letter-spacing="-0.8">31</text></symbol></svg>
<svg class="r" style="left:22px;top:21px" width="24" height="24" viewBox="0 0 24 24"><circle cx="12" cy="11.5" r="9.3" fill="none" stroke="#2196ea" stroke-width="2.2"/><text x="12" y="14.3" font-size="8" font-weight="bold" text-anchor="middle" fill="#2196ea" font-family="Liberation Sans" letter-spacing="-0.6">USU</text></svg>
<div class="t" style="left:50.0px;top:24.29px;font-size:19.5px;line-height:19.5px;color:#1f92e6;font-weight:normal;letter-spacing:-0.1px;">Name of your organization - USU software - USU.kz - [Kohereza]</div>
<div class="r" style="left:1476px;top:35px;width:9px;height:2px;background:#707070"></div>
<svg class="r" style="left:1503px;top:28px" width="13" height="11" viewBox="0 0 13 11"><rect x="1" y="1.5" width="11" height="8" fill="none" stroke="#707070" stroke-width="1.3"/><rect x="1" y="1" width="11" height="2" fill="#707070"/></svg>
<svg class="r" style="left:1532px;top:28px" width="12" height="11" viewBox="0 0 12 11"><path d="M1 1 L11 10 M11 1 L1 10" stroke="#707070" stroke-width="1.6"/></svg>
<div class="r" style="left:29px;top:69px;width:1px;height:20px;background:#c4c4c4"></div>
<div class="r" style="left:32px;top:69px;width:1px;height:20px;background:#c4c4c4"></div>
<svg class="r" style="left:37px;top:70px" width="16" height="18"><use href="#bookS"/></svg>
<div class="r" style="left:55px;top:62px;width:75px;height:34px;background:#e6e6e6"></div>
<div class="t" style="left:63.0px;top:72.00px;font-size:15px;line-height:15px;color:#3c3c3c;font-weight:normal;">Gahunda</div>
<div class="t" style="left:138.0px;top:72.00px;font-size:15px;line-height:15px;color:#3c3c3c;font-weight:normal;">Ububikoshingiro</div>
<div class="t" style="left:262.7px;top:72.00px;font-size:15px;line-height:15px;color:#3c3c3c;font-weight:normal;">Amabwiriza</div>
<div class="t" style="left:355.8px;top:72.00px;font-size:15px;line-height:15px;color:#3c3c3c;font-weight:normal;">Idirishya</div>
<div class="t" style="left:425.8px;top:72.00px;font-size:15px;line-height:15px;color:#3c3c3c;font-weight:normal;">Ubufasha</div>
<div class="r" style="left:1422px;top:81px;width:9px;height:2.5px;background:#707070"></div>
<svg class="r" style="left:1453px;top:73px" width="14" height="12" viewBox="0 0 14 12"><rect x="4.5" y="1" width="8" height="6" fill="none" stroke="#707070" stroke-width="1.2"/><rect x="4.5" y="0.6" width="8" height="1.6" fill="#707070"/><rect x="1" y="5" width="8" height="6" fill="#fff" stroke="#707070" stroke-width="1.2"/><rect x="1" y="4.6" width="8" height="1.6" fill="#707070"/></svg>
<svg class="r" style="left:1490px;top:74px" width="13" height="11" viewBox="0 0 13 11"><path d="M1.5 1 L11.5 10 M11.5 1 L1.5 10" stroke="#707070" stroke-width="1.6"/></svg>
<svg class="r" style="left:1524px;top:71px" width="18" height="18"><use href="#circArrow"/></svg>
<div class="r" style="left:29px;top:117px;width:1px;height:21px;background:#c8c8c8"></div>
<div class="r" style="left:32px;top:117px;width:1px;height:21px;background:#c8c8c8"></div>
<div class="r" style="left:234px;top:105px;width:1px;height:45px;background:#c4c4c4"></div>
<div class="r" style="left:389px;top:105px;width:1px;height:45px;background:#c4c4c4"></div>
<div class="r" style="left:544px;top:105px;width:1px;height:45px;background:#c4c4c4"></div>
<div class="r" style="left:738px;top:105px;width:1px;height:45px;background:#c4c4c4"></div>
<div class="r" style="left:942px;top:105px;width:1px;height:45px;background:#c4c4c4"></div>
<div class="r" style="left:1096px;top:105px;width:1px;height:45px;background:#c4c4c4"></div>
<div class="r" style="left:1251px;top:105px;width:1px;height:45px;background:#c4c4c4"></div>
<div class="r" style="left:1309px;top:105px;width:1px;height:45px;background:#c4c4c4"></div>
<svg class="r" style="left:645px;top:119px" width="18" height="18"><use href="#circArrow"/></svg>
<div class="r" style="left:679px;top:117px;width:1px;height:21px;background:#c8c8c8"></div>
<div class="r" style="left:682px;top:117px;width:1px;height:21px;background:#c8c8c8"></div>
<svg class="r" style="left:42px;top:106px" width="40" height="40"><use href="#tbNew"/></svg>
<svg class="r" style="left:90px;top:106px" width="40" height="40"><use href="#tbCopy"/></svg>
<svg class="r" style="left:140px;top:106px" width="40" height="40"><use href="#tbEdit"/></svg>
<svg class="r" style="left:189px;top:106px" width="40" height="40"><use href="#tbDel"/></svg>
<svg class="r" style="left:243px;top:106px" width="40" height="40"><use href="#tbRefresh"/></svg>
<svg class="r" style="left:293px;top:106px" width="40" height="40"><use href="#tbSearch"/></svg>
<svg class="r" style="left:341px;top:106px" width="40" height="40"><use href="#tbSearchGrid"/></svg>
<svg class="r" style="left:400px;top:106px" width="40" height="40"><use href="#tbFunnel"/></svg>
<svg class="r" style="left:445px;top:106px" width="40" height="40"><use href="#tbFilterCol"/></svg>
<svg class="r" style="left:497px;top:106px" width="40" height="40"><use href="#tbFunnelCheck"/></svg>
<svg class="r" style="left:556px;top:106px" width="40" height="40"><use href="#tbFlag"/></svg>
<svg class="r" style="left:690px;top:106px" width="40" height="40"><use href="#tbGrid"/></svg>
<svg class="r" style="left:747px;top:106px" width="40" height="40"><use href="#tbGear"/></svg>
<svg class="r" style="left:796px;top:106px" width="40" height="40"><use href="#tbMap"/></svg>
<svg class="r" style="left:845px;top:106px" width="40" height="40"><use href="#tbColor"/></svg>
<svg class="r" style="left:894px;top:106px" width="40" height="40"><use href="#tbHand"/></svg>
<svg class="r" style="left:951px;top:106px" width="40" height="40"><use href="#tbRss"/></svg>
<svg class="r" style="left:1002px;top:106px" width="40" height="40"><use href="#tbUserKey"/></svg>
<svg class="r" style="left:1049px;top:106px" width="40" height="40"><use href="#tbGroup"/></svg>
<svg class="r" style="left:1106px;top:106px" width="40" height="40"><use href="#tbTable"/></svg>
<svg class="r" style="left:1155px;top:106px" width="40" height="40"><use href="#tbPrint"/></svg>
<svg class="r" style="left:1204px;top:106px" width="40" height="40"><use href="#tbGo"/></svg>
<svg class="r" style="left:1262px;top:106px" width="40" height="40"><use href="#tbInfo"/></svg>
<svg class="r" style="left:1319px;top:106px" width="40" height="40"><use href="#tbLock"/></svg>
<svg class="r" style="left:1368px;top:106px" width="40" height="40"><use href="#tbPlug"/></svg>
<svg class="r" style="left:1416px;top:106px" width="40" height="40"><use href="#tbDoor"/></svg>
<div class="t" style="left:1460.0px;top:120.15px;font-size:14px;line-height:14px;color:#3c3c3c;font-weight:normal;">Sohoka</div>
<svg class="r" style="left:1524px;top:119px" width="18" height="18"><use href="#circArrow"/></svg>
<div class="r" style="left:27px;top:164px;width:27px;height:150px;background:#f4f4f4;border:1px solid #b9b9b9;box-sizing:border-box"></div>
<svg class="r" style="left:30px;top:168px" width="18" height="19"><use href="#userS"/></svg>
<div class="t" style="left:45.5px;top:197px;font-size:13px;line-height:13px;color:#5a5a6a;letter-spacing:0.3px;transform-origin:0 0;transform:rotate(90deg);white-space:nowrap">Inkunga ya tekiniki</div>
<div class="r" style="left:59px;top:160px;width:303px;height:744px;border:1px solid #b9b9b9;box-sizing:border-box;background:#fff"></div>
<div class="r" style="left:60px;top:200px;width:301px;height:1px;background:#c8c8c8"></div>
<svg class="r" style="left:62px;top:172px" width="20" height="17"><use href="#folderHdr"/></svg>
<div class="t" style="left:88.6px;top:175.15px;font-size:14px;line-height:14px;color:#b9b9b9;font-weight:bold;letter-spacing:0.62px;">Abakoresha menu</div>
<svg class="r" style="left:335px;top:175px" width="12" height="12"><use href="#pin"/></svg>
<div class="r" style="left:61px;top:201px;width:299px;height:45px;background:#d9f0fd"></div>
<div class="r" style="left:61px;top:246px;width:299px;height:44px;background:#dcf9e0"></div>
<div class="r" style="left:61px;top:290px;width:299px;height:44px;background:#d9f0fd"></div>
<div class="r" style="left:61px;top:334px;width:299px;height:44px;background:#dcf9e0"></div>
<div class="r" style="left:61px;top:378px;width:299px;height:44px;background:#d9f0fd"></div>
<div class="r" style="left:61px;top:422px;width:299px;height:43px;background:#dcf9e0"></div>
<div class="r" style="left:61px;top:465px;width:299px;height:44px;background:#d9f0fd"></div>
<div class="r" style="left:61px;top:509px;width:299px;height:43px;background:#dcf9e0"></div>
<div class="r" style="left:61px;top:552px;width:299px;height:44px;background:#d9f0fd"></div>
<div class="r" style="left:61px;top:596px;width:299px;height:44px;background:#dcf9e0"></div>
<div class="r" style="left:236px;top:465px;width:124px;height:44px;background:#b9b9b9"></div>
<div class="r" style="left:83px;top:233px;width:1px;height:385px;background-image:linear-gradient(#c0c0c0 50%,transparent 50%);background-size:1px 2px"></div>
<div class="r" style="left:127px;top:244px;width:1px;height:286px;background-image:linear-gradient(#c0c0c0 50%,transparent 50%);background-size:1px 2px"></div>
<div class="r" style="left:170px;top:288px;width:1px;height:200px;background-image:linear-gradient(#c0c0c0 50%,transparent 50%);background-size:1px 2px"></div>
<div class="r" style="left:92px;top:223px;width:14px;height:1px;background-image:linear-gradient(90deg,#c0c0c0 50%,transparent 50%);background-size:2px 1px"></div>
<div class="r" style="left:136px;top:267px;width:14px;height:1px;background-image:linear-gradient(90deg,#c0c0c0 50%,transparent 50%);background-size:2px 1px"></div>
<div class="r" style="left:171px;top:311px;width:22px;height:1px;background-image:linear-gradient(90deg,#c0c0c0 50%,transparent 50%);background-size:2px 1px"></div>
<div class="r" style="left:171px;top:355px;width:22px;height:1px;background-image:linear-gradient(90deg,#c0c0c0 50%,transparent 50%);background-size:2px 1px"></div>
<div class="r" style="left:171px;top:399px;width:22px;height:1px;background-image:linear-gradient(90deg,#c0c0c0 50%,transparent 50%);background-size:2px 1px"></div>
<div class="r" style="left:171px;top:443px;width:22px;height:1px;background-image:linear-gradient(90deg,#c0c0c0 50%,transparent 50%);background-size:2px 1px"></div>
<div class="r" style="left:171px;top:487px;width:22px;height:1px;background-image:linear-gradient(90deg,#c0c0c0 50%,transparent 50%);background-size:2px 1px"></div>
<div class="r" style="left:136px;top:530px;width:14px;height:1px;background-image:linear-gradient(90deg,#c0c0c0 50%,transparent 50%);background-size:2px 1px"></div>
<div class="r" style="left:92px;top:574px;width:14px;height:1px;background-image:linear-gradient(90deg,#c0c0c0 50%,transparent 50%);background-size:2px 1px"></div>
<div class="r" style="left:92px;top:618px;width:14px;height:1px;background-image:linear-gradient(90deg,#c0c0c0 50%,transparent 50%);background-size:2px 1px"></div>
<svg class="r" style="left:74px;top:215px" width="18" height="18"><use href="#treeOpen"/></svg>
<svg class="r" style="left:118px;top:259px" width="18" height="18"><use href="#treeOpen"/></svg>
<svg class="r" style="left:118px;top:521px" width="18" height="18"><use href="#treeClosed"/></svg>
<svg class="r" style="left:74px;top:565px" width="18" height="18"><use href="#treeClosed"/></svg>
<svg class="r" style="left:74px;top:609px" width="18" height="18"><use href="#treeClosed"/></svg>
<svg class="r" style="left:105px;top:208px" width="42" height="32"><use href="#folderOpen"/></svg>
<svg class="r" style="left:149px;top:252px" width="42" height="32"><use href="#folderOpen"/></svg>
<svg class="r" style="left:149px;top:514px" width="38" height="32"><use href="#folderClosed"/></svg>
<svg class="r" style="left:105px;top:558px" width="38" height="32"><use href="#folderClosed"/></svg>
<svg class="r" style="left:105px;top:602px" width="38" height="32"><use href="#folderClosed"/></svg>
<svg class="r" style="left:197px;top:293px" width="34" height="36"><use href="#bookL"/></svg>
<svg class="r" style="left:197px;top:337px" width="34" height="36"><use href="#bookL"/></svg>
<svg class="r" style="left:197px;top:381px" width="34" height="36"><use href="#bookL"/></svg>
<svg class="r" style="left:197px;top:425px" width="34" height="36"><use href="#bookL"/></svg>
<svg class="r" style="left:197px;top:469px" width="34" height="36"><use href="#bookL"/></svg>
<div class="t s13" style="left:150.0px;top:218.90px;font-size:13px;line-height:13px;color:#3b3b3b;font-weight:normal;">Module</div>
<div class="t s13" style="left:194.0px;top:262.50px;font-size:13px;line-height:13px;color:#3b3b3b;font-weight:normal;">Ishirahamwe</div>
<div class="t s13" style="left:238.5px;top:306.60px;font-size:13px;line-height:13px;color:#3b3b3b;font-weight:normal;">Abakiriya</div>
<div class="t s13" style="left:238.5px;top:350.60px;font-size:13px;line-height:13px;color:#3b3b3b;font-weight:normal;">Amafaranga</div>
<div class="t s13" style="left:238.5px;top:394.60px;font-size:13px;line-height:13px;color:#3b3b3b;font-weight:normal;">Amashirahamwe</div>
<div class="t s13" style="left:238.5px;top:428.80px;font-size:13px;line-height:13px;color:#3b3b3b;font-weight:normal;">Hamagara kuri</div>
<div class="t s13" style="left:238.5px;top:445.00px;font-size:13px;line-height:13px;color:#3b3b3b;font-weight:normal;">terefone.</div>
<div class="t s13" style="left:238.5px;top:482.60px;font-size:13px;line-height:13px;color:#f4f4f4;font-weight:normal;">Kohereza</div>
<div class="t s13" style="left:193.8px;top:526.50px;font-size:13px;line-height:13px;color:#3b3b3b;font-weight:normal;">Ububiko</div>
<div class="t s13" style="left:150.0px;top:570.50px;font-size:13px;line-height:13px;color:#3b3b3b;font-weight:normal;">Ubuyobozi</div>
<div class="t s13" style="left:150.0px;top:614.50px;font-size:13px;line-height:13px;color:#3b3b3b;font-weight:normal;">Raporo</div>
<svg class="r" style="left:330px;top:878px" width="18" height="18"><use href="#searchBlue"/></svg>
<div class="r" style="left:369px;top:522px;width:1px;height:20px;background-image:linear-gradient(#606060 50%,transparent 50%);background-size:1px 2.5px"></div>
<div class="r" style="left:382px;top:177px;width:1px;height:19px;background:#c4c4c4"></div>
<div class="r" style="left:385px;top:177px;width:1px;height:19px;background:#c4c4c4"></div>
<svg class="r" style="left:394px;top:165px" width="40" height="40"><use href="#tbGo"/></svg>
<div class="t" style="left:437.8px;top:177.90px;font-size:15px;line-height:15px;color:#3c3c3c;font-weight:normal;">Ibikorwa</div>
<svg class="r" style="left:496px;top:183px" width="9" height="6" viewBox="0 0 9 6"><path d="M1 1 L8 1 L4.5 4.5Z" fill="#3c3c3c"/></svg>
<div class="r" style="left:515px;top:164px;width:1px;height:45px;background:#c4c4c4"></div>
<svg class="r" style="left:524px;top:167px" width="38" height="38"><use href="#clock"/></svg>
<svg class="r" style="left:579px;top:178px" width="18" height="18"><use href="#circArrow"/></svg>
<div class="t" style="left:990.5px;top:173.02px;font-size:27.5px;line-height:27.5px;color:#2e2e2e;font-weight:normal;transform:scaleX(0.89);transform-origin:0 0;">Kohereza</div>
<svg class="r" style="left:1491px;top:178px" width="18" height="18"><use href="#circArrow"/></svg>
<div class="r" style="left:375px;top:216px;width:1140px;height:680px;border:1px solid #c4c4c4;border-bottom:2px solid #c4c4c4;box-sizing:border-box"></div>
<div class="r" style="left:376px;top:323px;width:1px;height:244px;background:#c4c4c4"></div>
<div class="r" style="left:392px;top:234px;width:432px;height:31px;border:1px solid #c8c8c8;box-sizing:border-box;background:#fff"></div>
<div class="t s13" style="left:394.0px;top:242.50px;font-size:13px;line-height:13px;color:#404040;font-weight:normal;">Gushakisha kumeza yuzuye</div>
<svg class="r" style="left:802px;top:245px" width="10" height="6" viewBox="0 0 10 6"><path d="M1 1 L8 1 L4.5 4.5Z" fill="#404040"/></svg>
<div class="r" style="left:377px;top:280px;width:1137px;height:1px;background:#cfcfcf"></div>
<div class="t s13" style="left:385.5px;top:297.50px;font-size:13px;line-height:13px;color:#bcbcbc;font-weight:normal;letter-spacing:0.15px">Kurura inkingi yerekeza hano kubitsinda</div>
<div class="r" style="left:377px;top:323px;width:1086px;height:2px;background:#bdbdbd"></div>
<div class="r" style="left:1463px;top:324px;width:51px;height:1px;background:#c8c8c8"></div>
<div class="r" style="left:377px;top:325px;width:1086px;height:43px;background:#f4f4f4"></div>
<div class="r" style="left:377px;top:367px;width:1086px;height:1px;background:#c8c8c8"></div>
<div class="r" style="left:1462px;top:325px;width:1px;height:242px;background:#c8c8c8"></div>
<div class="r" style="left:390px;top:325px;width:1px;height:43px;background:#d0d0d0"></div>
<div class="r" style="left:537px;top:325px;width:1px;height:43px;background:#d0d0d0"></div>
<div class="r" style="left:625px;top:325px;width:1px;height:43px;background:#d0d0d0"></div>
<div class="r" style="left:712px;top:325px;width:1px;height:43px;background:#d0d0d0"></div>
<div class="r" style="left:838px;top:325px;width:1px;height:43px;background:#d0d0d0"></div>
<div class="r" style="left:962px;top:325px;width:1px;height:43px;background:#d0d0d0"></div>
<div class="r" style="left:1088px;top:325px;width:1px;height:43px;background:#d0d0d0"></div>
<div class="r" style="left:1175px;top:325px;width:1px;height:43px;background:#d0d0d0"></div>
<div class="r" style="left:1300px;top:325px;width:1px;height:43px;background:#d0d0d0"></div>
<div class="r" style="left:390px;top:368px;width:1px;height:199px;background:#d0d0d0"></div>
<div class="r" style="left:377px;top:368px;width:13px;height:199px;background:#f4f4f4"></div>
<div class="t s13" style="left:392.3px;top:332.40px;font-size:13px;line-height:13px;color:#3c3c3c;font-weight:normal;">Umukozi</div>
<div class="t s13" style="left:540.2px;top:332.40px;font-size:13px;line-height:13px;color:#3c3c3c;font-weight:normal;">Itariki</div>
<div class="t s13" style="left:628.0px;top:332.40px;font-size:13px;line-height:13px;color:#3c3c3c;font-weight:normal;">Ubwoko bwo</div>
<div class="t s13" style="left:715.8px;top:332.40px;font-size:13px;line-height:13px;color:#3c3c3c;font-weight:normal;">Twandikire</div>
<div class="t s13" style="left:840.6px;top:332.40px;font-size:13px;line-height:13px;color:#3c3c3c;font-weight:normal;">Uwakiriye</div>
<div class="t s13" style="left:965.3px;top:332.40px;font-size:13px;line-height:13px;color:#3c3c3c;font-weight:normal;">Ingingo</div>
<div class="t s13" style="left:1090.0px;top:332.40px;font-size:13px;line-height:13px;color:#3c3c3c;font-weight:normal;">Igiciro</div>
<div class="t s13" style="left:1177.9px;top:332.40px;font-size:13px;line-height:13px;color:#3c3c3c;font-weight:normal;">Imiterere</div>
<div class="t s13" style="left:1302.6px;top:332.40px;font-size:13px;line-height:13px;color:#3c3c3c;font-weight:normal;">Icyitonderwa</div>
<div class="t s13" style="left:628.0px;top:348.50px;font-size:13px;line-height:13px;color:#3c3c3c;font-weight:normal;">kohereza</div>
<div class="r" style="left:391px;top:370px;width:1071px;height:42px;background:#d7effc"></div>
<div class="r" style="left:391px;top:411px;width:1071px;height:1px;background:#c8c8c8"></div>
<div class="t s13" style="left:426.8px;top:383.90px;font-size:13px;line-height:13px;color:#3b3b3b;font-weight:normal;letter-spacing:0.3px">Umukozi # 1</div>
<div class="t s13" style="left:542.0px;top:383.90px;font-size:13px;line-height:13px;color:#3b3b3b;font-weight:normal;letter-spacing:0.3px">18.02.2022</div>
<svg class="r" style="left:630px;top:379px" width="14" height="19"><use href="#phone"/></svg>
<div class="t s13" style="left:648.9px;top:383.90px;font-size:13px;line-height:13px;color:#3b3b3b;font-weight:normal;">SMS</div>
<div class="t s13" style="left:717.0px;top:383.90px;font-size:13px;line-height:13px;color:#3b3b3b;font-weight:normal;letter-spacing:0.3px">+99990000000</div>
<div class="t s13" style="left:840.6px;top:383.90px;font-size:13px;line-height:13px;color:#3b3b3b;font-weight:normal;letter-spacing:0.3px">Umukiriya # 5</div>
<div class="t s13" style="left:965.3px;top:383.90px;font-size:13px;line-height:13px;color:#3b3b3b;font-weight:normal;">Kugabanuka</div>
<div class="t s13" style="right:398.5px;top:383.90px;font-size:13px;line-height:13px;color:#3b3b3b;font-weight:normal;text-align:right;letter-spacing:0.3px">1,50</div>
<div class="t s13" style="left:1177.9px;top:383.90px;font-size:13px;line-height:13px;color:#3b3b3b;font-weight:normal;letter-spacing:0.3px">Yoherejwe</div>
<div class="t s13" style="left:415.5px;top:417.60px;font-size:13px;line-height:13px;color:#f25c7c;font-weight:normal;">Inyandiko zimwe</div>
<div class="r" style="left:391px;top:435px;width:1071px;height:43px;background:#fefba8"></div>
<div class="r" style="left:391px;top:477px;width:1071px;height:1px;background:#c8c8c8"></div>
<div class="r" style="left:377px;top:434px;width:1086px;height:1px;background:#c8c8c8"></div>
<div class="t s13" style="left:426.8px;top:449.90px;font-size:13px;line-height:13px;color:#3b3b3b;font-weight:normal;letter-spacing:0.3px">Umukozi # 1</div>
<div class="t s13" style="left:542.0px;top:449.90px;font-size:13px;line-height:13px;color:#3b3b3b;font-weight:normal;letter-spacing:0.3px">18.02.2022</div>
<svg class="r" style="left:630px;top:445px" width="14" height="19"><use href="#phone"/></svg>
<div class="t s13" style="left:648.9px;top:449.90px;font-size:13px;line-height:13px;color:#3b3b3b;font-weight:normal;">SMS</div>
<div class="t s13" style="left:717.0px;top:449.90px;font-size:13px;line-height:13px;color:#3b3b3b;font-weight:normal;letter-spacing:0.3px">+77772222222</div>
<div class="t s13" style="left:840.6px;top:449.90px;font-size:13px;line-height:13px;color:#3b3b3b;font-weight:normal;letter-spacing:0.3px">Umukiriya # 5</div>
<div class="t s13" style="left:965.3px;top:449.90px;font-size:13px;line-height:13px;color:#3b3b3b;font-weight:normal;">Kugabanuka</div>
<div class="t s13" style="right:398.5px;top:449.90px;font-size:13px;line-height:13px;color:#3b3b3b;font-weight:normal;text-align:right;letter-spacing:0.3px">0,00</div>
<div class="t s13" style="left:1177.9px;top:449.90px;font-size:13px;line-height:13px;color:#3b3b3b;font-weight:normal;letter-spacing:0.3px">Kohereza</div>
<div class="t s13" style="left:415.5px;top:483.60px;font-size:13px;line-height:13px;color:#f25c7c;font-weight:normal;">Inyandiko zimwe</div>
<div class="r" style="left:391px;top:501px;width:1071px;height:43px;background:#e9b3b4"></div>
<div class="r" style="left:391px;top:543px;width:1071px;height:1px;background:#c8c8c8"></div>
<div class="r" style="left:377px;top:500px;width:1086px;height:1px;background:#c8c8c8"></div>
<div class="t s13" style="left:426.8px;top:515.90px;font-size:13px;line-height:13px;color:#3b3b3b;font-weight:normal;letter-spacing:0.3px">Umukozi # 1</div>
<div class="t s13" style="left:542.0px;top:515.90px;font-size:13px;line-height:13px;color:#3b3b3b;font-weight:normal;letter-spacing:0.3px">18.02.2022</div>
<svg class="r" style="left:630px;top:511px" width="14" height="19"><use href="#phone"/></svg>
<div class="t s13" style="left:648.9px;top:515.90px;font-size:13px;line-height:13px;color:#3b3b3b;font-weight:normal;">SMS</div>
<div class="t s13" style="left:717.0px;top:515.90px;font-size:13px;line-height:13px;color:#3b3b3b;font-weight:normal;letter-spacing:0.3px">+79990000000</div>
<div class="t s13" style="left:840.6px;top:515.90px;font-size:13px;line-height:13px;color:#3b3b3b;font-weight:normal;letter-spacing:0.3px">Umukiriya # 7</div>
<div class="t s13" style="left:965.3px;top:515.90px;font-size:13px;line-height:13px;color:#3b3b3b;font-weight:normal;">Kugabanuka</div>
<div class="t s13" style="right:398.5px;top:515.90px;font-size:13px;line-height:13px;color:#3b3b3b;font-weight:normal;text-align:right;letter-spacing:0.3px">0,00</div>
<div class="t s13" style="left:1177.9px;top:515.90px;font-size:13px;line-height:13px;color:#3b3b3b;font-weight:normal;letter-spacing:0.3px">Ikosa</div>
<div class="t s13" style="left:1303.0px;top:515.90px;font-size:13px;line-height:13px;color:#3b3b3b;font-weight:normal;letter-spacing:0.15px">Abiyandikisha ntibabaho</div>
<div class="t s13" style="left:415.5px;top:549.60px;font-size:13px;line-height:13px;color:#f25c7c;font-weight:normal;">Inyandiko zimwe</div>
<div class="r" style="left:377px;top:566px;width:1086px;height:1px;background:#c8c8c8"></div>
<div class="r" style="left:391px;top:369px;width:1071px;height:65px;border:1px dotted #222;box-sizing:border-box"></div>
<svg class="r" style="left:380px;top:397px" width="7" height="11" viewBox="0 0 7 11"><path d="M1 1 L5.5 5 L1 9Z" fill="#606060"/></svg>
<div class="r" style="left:377px;top:849px;width:1086px;height:1px;background:#c8c8c8"></div>
<div class="r" style="left:377px;top:850px;width:1086px;height:45px;background:#f4f4f4"></div>
<div class="r" style="left:377px;top:894px;width:1086px;height:2px;background:#c4c4c4"></div>
<div class="r" style="left:1091px;top:853px;width:83px;height:38px;background:#fff;border:1px solid #c8c8c8;box-sizing:border-box"></div>
<div class="t s13" style="right:405.5px;top:867.00px;font-size:13px;line-height:13px;color:#3c3c3c;font-weight:normal;text-align:right;">1,50</div>
<div class="r" style="left:1517px;top:163px;width:26px;height:81px;background:#f4f4f4;border:1px solid #b9b9b9;box-sizing:border-box"></div>
<svg class="r" style="left:1521px;top:167px" width="21" height="20"><use href="#helpBook"/></svg>
<div class="t" style="left:1540px;top:197px;font-size:13px;line-height:13px;color:#5a5a6a;letter-spacing:0.6px;transform-origin:0 0;transform:rotate(90deg);white-space:nowrap">Igitabo</div>
<div class="r" style="left:934px;top:900px;width:21px;height:1px;background-image:linear-gradient(90deg,#808080 50%,transparent 50%);background-size:2.5px 1px"></div>
<div class="r" style="left:21px;top:906px;width:1529px;height:2px;background:#c8c8c8"></div>
<div class="r" style="left:1037px;top:910px;width:512px;height:1px;background:#c8c8c8"></div>
<div class="r" style="left:1548px;top:906px;width:2px;height:5px;background:#c8c8c8"></div>
<div class="r" style="left:21px;top:906px;width:3px;height:5px;background:#c8c8c8"></div>
<div class="r" style="left:24px;top:908px;width:846px;height:52px;background:#f4f4f4;border-left:1px solid #c0c0c0;box-sizing:border-box"></div>
<div class="r" style="left:24px;top:959px;width:846px;height:1px;background:#c8c8c8"></div>
<div class="r" style="left:225px;top:909px;width:2px;height:50px;background:#bdbdbd"></div>
<div class="r" style="left:408px;top:909px;width:2px;height:50px;background:#bdbdbd"></div>
<div class="r" style="left:614px;top:909px;width:2px;height:50px;background:#bdbdbd"></div>
<div class="r" style="left:870px;top:907px;width:167px;height:53px;background:#fff;border-right:1px solid #b0b0b0;box-sizing:border-box"></div>
<div class="r" style="left:870px;top:959px;width:167px;height:3px;background:#0aa0f0"></div>
<svg class="r" style="left:40px;top:920px" width="31" height="29"><use href="#winIcon"/></svg>
<div class="t s13" style="left:82.0px;top:927.70px;font-size:13px;line-height:13px;color:#555555;font-weight:normal;letter-spacing:0.25px">Gutangiza vuba</div>
<div class="r" style="left:189.7px;top:926px;width:19px;height:18px;background:#fff"></div>
<svg class="r" style="left:193.7px;top:928px" width="12" height="11" viewBox="0 0 12 11"><path d="M1.5 1.5 L10.5 9.5 M10.5 1.5 L1.5 9.5" stroke="#1a8fe0" stroke-width="2.2"/></svg>
<svg class="r" style="left:241px;top:915px" width="33" height="37"><use href="#bookL"/></svg>
<div class="t s13" style="left:284.2px;top:927.70px;font-size:13px;line-height:13px;color:#555555;font-weight:normal;letter-spacing:0.25px">Amafaranga</div>
<div class="r" style="left:372.4px;top:926px;width:19px;height:18px;background:#fff"></div>
<svg class="r" style="left:376.4px;top:928px" width="12" height="11" viewBox="0 0 12 11"><path d="M1.5 1.5 L10.5 9.5 M10.5 1.5 L1.5 9.5" stroke="#1a8fe0" stroke-width="2.2"/></svg>
<svg class="r" style="left:423.5px;top:915px" width="33" height="37"><use href="#bookL"/></svg>
<div class="t s13" style="left:467.3px;top:927.70px;font-size:13px;line-height:13px;color:#555555;font-weight:normal;letter-spacing:0.25px">Amashirahamwe</div>
<div class="r" style="left:578.3px;top:926px;width:19px;height:18px;background:#fff"></div>
<svg class="r" style="left:582.3px;top:928px" width="12" height="11" viewBox="0 0 12 11"><path d="M1.5 1.5 L10.5 9.5 M10.5 1.5 L1.5 9.5" stroke="#1a8fe0" stroke-width="2.2"/></svg>
<svg class="r" style="left:629.7px;top:915px" width="33" height="37"><use href="#bookL"/></svg>
<div class="t s13" style="left:672.6px;top:927.70px;font-size:13px;line-height:13px;color:#555555;font-weight:normal;letter-spacing:0.25px">Hamagara kuri terefone.</div>
<div class="r" style="left:834.7px;top:926px;width:19px;height:18px;background:#fff"></div>
<svg class="r" style="left:838.7px;top:928px" width="12" height="11" viewBox="0 0 12 11"><path d="M1.5 1.5 L10.5 9.5 M10.5 1.5 L1.5 9.5" stroke="#1a8fe0" stroke-width="2.2"/></svg>
<svg class="r" style="left:886px;top:915px" width="33" height="37"><use href="#bookL"/></svg>
<div class="t s13" style="left:928.5px;top:927.70px;font-size:13px;line-height:13px;color:#1a8fe0;font-weight:normal;letter-spacing:0.25px">Kohereza</div>
<svg class="r" style="left:1004.7px;top:928px" width="12" height="11" viewBox="0 0 12 11"><path d="M1.5 1.5 L10.5 9.5 M10.5 1.5 L1.5 9.5" stroke="#1a8fe0" stroke-width="2.2"/></svg>
<svg class="r" style="left:28px;top:965px" width="21" height="21"><use href="#infoS"/></svg>
<div class="t s13" style="left:70.0px;top:970.00px;font-size:13px;line-height:13px;color:#3c3c3c;font-weight:normal;letter-spacing:0.25px">7.3.9041.10 Professional</div>
<div class="r" style="left:246px;top:966px;width:1px;height:19px;background:#c8c8c8"></div>
<div class="r" style="left:416px;top:966px;width:1px;height:19px;background:#c8c8c8"></div>
<div class="r" style="left:595px;top:966px;width:1px;height:19px;background:#c8c8c8"></div>
<div class="r" style="left:744px;top:966px;width:1px;height:19px;background:#c8c8c8"></div>
<div class="r" style="left:892px;top:966px;width:1px;height:19px;background:#c8c8c8"></div>
<div class="r" style="left:1518px;top:966px;width:1px;height:19px;background:#c8c8c8"></div>
<svg class="r" style="left:259px;top:964px" width="19" height="22"><use href="#dbIcon"/></svg>
<div class="t s13" style="left:298.9px;top:970.00px;font-size:13px;line-height:13px;color:#3c3c3c;font-weight:normal;letter-spacing:0.3px">localhost (utf8)</div>
<svg class="r" style="left:429px;top:964px" width="19" height="21"><use href="#userS"/></svg>
<div class="t s13" style="left:468.7px;top:970.00px;font-size:13px;line-height:13px;color:#3c3c3c;font-weight:normal;">NIKOLAY (MAIN)</div>
<svg class="r" style="left:607px;top:965px" width="21" height="21"><use href="#calIcon"/></svg>
<div class="t s13" style="left:649.2px;top:970.00px;font-size:13px;line-height:13px;color:#3c3c3c;font-weight:normal;letter-spacing:0.4px">13.06.2024</div>
<div class="t s13" style="left:779.2px;top:970.00px;font-size:13px;line-height:13px;color:#3c3c3c;font-weight:normal;letter-spacing:0.5px">00:00:00:343</div>
<svg class="r" style="left:1532px;top:970px" width="16" height="16" viewBox="0 0 16 16"><path d="M13 0.5v3M11.5 2h3" stroke="#606060" stroke-width="1"/><path d="M9 4.5v3M7.5 6h3" stroke="#606060" stroke-width="1"/><path d="M13 4.5v3M11.5 6h3" stroke="#606060" stroke-width="1"/><path d="M5 8.5v3M3.5 10h3" stroke="#606060" stroke-width="1"/><path d="M9 8.5v3M7.5 10h3" stroke="#606060" stroke-width="1"/><path d="M13 8.5v3M11.5 10h3" stroke="#606060" stroke-width="1"/></svg>
<div class="r" style="left:0;top:0;width:1571px;height:1009px;border:1px solid #939393;box-sizing:border-box;pointer-events:none"></div>
</body></html>
